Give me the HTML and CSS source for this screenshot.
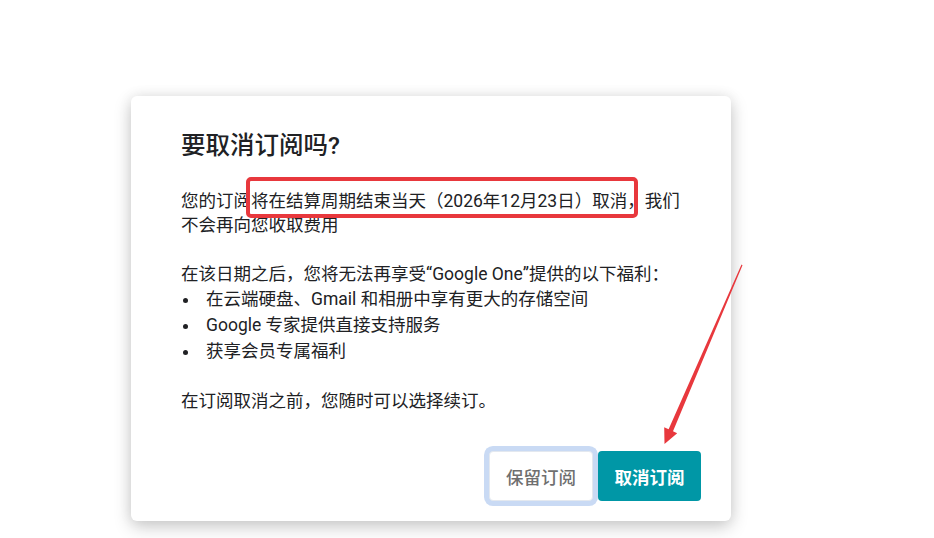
FILE: index.html
```html
<!DOCTYPE html>
<html lang="zh-CN">
<head>
<meta charset="utf-8">
<title>要取消订阅吗？</title>
<link rel="stylesheet" href="styles.css">
</head>
<body>
<div class="page">
  <div class="dialog">
    <h2 class="title">要取消订阅吗?</h2>
    <p class="text">您的订阅将在结算周期结束当天（2026年12月23日）取消，我们不会再向您收取费用</p>
    <p class="text gap">在该日期之后，您将无法再享受“Google One”提供的以下福利：</p>
    <ul class="list">
      <li>在云端硬盘、Gmail 和相册中享有更大的存储空间</li>
      <li>Google 专家提供直接支持服务</li>
      <li>获享会员专属福利</li>
    </ul>
    <p class="text gap">在订阅取消之前，您随时可以选择续订。</p>
    <div class="actions">
      <button class="btn btn-keep">保留订阅</button>
      <button class="btn btn-cancel">取消订阅</button>
    </div>
    <div class="highlight"></div>
  </div>
  <svg class="arrow" width="934" height="538" viewBox="0 0 934 538">
    <polygon fill="#e8383d" points="741.5,264.6 742.5,265.2 673,431.2 677.2,433.2 664.5,444 664.2,427.2 668.6,429.2"/>
  </svg>
</div>
</body>
</html>
```

FILE: styles.css
```css
html, body {
  margin: 0;
  padding: 0;
  background: #ffffff;
}

body {
  font-family: Roboto, "Noto Sans CJK SC", "Noto Sans", sans-serif;
  color: #202124;
}

.page {
  position: relative;
  width: 934px;
  height: 538px;
  overflow: hidden;
  padding: 96px 0 0 131px;
  box-sizing: border-box;
}

.dialog {
  position: relative;
  width: 600px;
  box-sizing: border-box;
  padding: 35px 30px 20px 50px;
  background: #fff;
  border-radius: 6px;
  box-shadow: 0 6px 18px rgba(0, 0, 0, 0.2), 0 0 14px rgba(0, 0, 0, 0.07);
}

.title {
  margin: 0 0 28px 0;
  font-size: 24.5px;
  line-height: 30px;
  font-weight: 500;
  color: #202124;
}

.text {
  margin: 0;
  width: 500px;
  font-size: 17.5px;
  line-height: 24px;
  color: #202124;
}

.gap {
  margin-top: 25px;
}

.list {
  margin: 0;
  padding: 0;
  font-size: 17.5px;
  line-height: 26px;
  list-style: none;
}

.list li::before {
  content: "";
  display: inline-block;
  width: 5px;
  height: 5px;
  border-radius: 50%;
  background: #202124;
  margin: 0 18px 0 2px;
  vertical-align: middle;
}

.actions {
  display: flex;
  justify-content: flex-end;
  gap: 5px;
  margin-top: 38px;
}

.btn {
  height: 50px;
  border: none;
  border-radius: 4px;
  font-family: Roboto, "Noto Sans CJK SC", sans-serif;
  font-size: 17.5px;
  padding: 0;
  cursor: pointer;
}

.btn-keep {
  width: 104px;
  background: #fff;
  color: #6f6f6f;
  font-weight: 500;
  border: 1px solid #e3e8ef;
  box-shadow: 0 0 0 5px #c9daf4;
}

.btn-cancel {
  width: 103px;
  background: #0097a6;
  color: #fff;
  font-weight: 700;
}

.highlight {
  position: absolute;
  left: 115px;
  top: 81px;
  width: 392px;
  height: 41px;
  box-sizing: border-box;
  border: 4px solid #e8383d;
  border-radius: 5px;
}

.arrow {
  position: absolute;
  left: 0;
  top: 0;
  pointer-events: none;
}
```
